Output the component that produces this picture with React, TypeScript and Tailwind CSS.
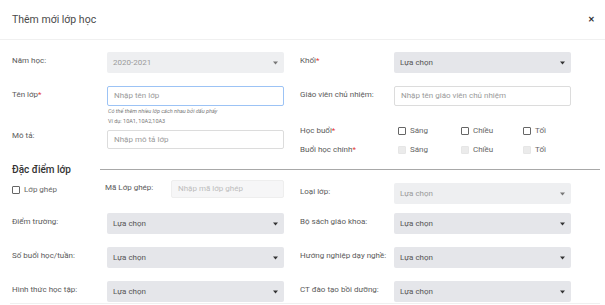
import React from "react";

const Req = () => <span className="text-[#e53935]">*</span>;

const Select = ({ value = "Lựa chọn", disabled = false, w = "w-[177px]" }: { value?: string; disabled?: boolean; w?: string }) => (
  <div
    className={`${w} h-[21px] rounded-[2px] flex items-center justify-between pl-[6px] pr-[6px] ${
      disabled ? "bg-[#eeeff1] text-[#9a9a9a]" : "bg-[#e5e6ea] text-[#555]"
    }`}
  >
    <span className="text-[8px] leading-none">{value}</span>
    <svg width="5" height="4" viewBox="0 0 5 4" className={disabled ? "text-[#777]" : "text-[#333]"}>
      <path d="M0 0.5 L5 0.5 L2.5 3.5 Z" fill="currentColor" />
    </svg>
  </div>
);

const Input = ({
  placeholder,
  focused = false,
  disabled = false,
  w = "w-[177px]",
  h = "h-[20px]",
}: {
  placeholder: string;
  focused?: boolean;
  disabled?: boolean;
  w?: string;
  h?: string;
}) => (
  <div
    className={`${w} ${h} rounded-[2px] border flex items-center pl-[6px] ${
      focused ? "border-[#9cc3f5]" : disabled ? "border-[#eeeeee] bg-[#f6f6f7]" : "border-[#dcdcdc] bg-white"
    }`}
  >
    <span className={`text-[8px] leading-none ${disabled ? "text-[#bdbdbd]" : "text-[#9a9a9a]"}`}>{placeholder}</span>
  </div>
);

const Check = ({ label, disabled = false }: { label: string; disabled?: boolean }) => (
  <div className="flex items-center gap-[4px]">
    <span
      className={`w-[8px] h-[8px] rounded-[1px] border ${
        disabled ? "border-[#e6e6e6] bg-[#ebebeb]" : "border-[#666] bg-white"
      }`}
    />
    <span className="text-[8px] leading-[10px] text-[#666]">{label}</span>
  </div>
);

const Label = ({ children, w }: { children: React.ReactNode; w: string }) => (
  <div className={`${w} shrink-0 pt-[4px] text-[8px] leading-[10px] text-[#5a5a5a]`}>{children}</div>
);

const Row = ({
  left,
  right,
  className = "",
}: {
  left: React.ReactNode;
  right: React.ReactNode;
  className?: string;
}) => (
  <div className={`flex ${className}`}>
    <div className="flex w-[288px] shrink-0">{left}</div>
    <div className="flex">{right}</div>
  </div>
);

export default function App() {
  return (
    <div className="w-[605px] h-[305px] overflow-hidden bg-white font-['Roboto',sans-serif]">
      {/* Header */}
      <div className="h-[40px] border-b border-[#f0f0f0] flex items-center justify-between pl-[12px] pr-[10px]">
        <h2 className="text-[10.5px] text-[#4a4a4a]">Thêm mới lớp học</h2>
        <span className="text-[8px] font-bold text-[#333] leading-none">✕</span>
      </div>

      {/* Body */}
      <div className="pl-[12px] pr-[5px] pt-[12px]">
        <Row
          left={
            <>
              <Label w="w-[95px]">Năm học:</Label>
              <Select value="2020-2021" disabled />
            </>
          }
          right={
            <>
              <Label w="w-[94px]">
                Khối<Req />
              </Label>
              <Select />
            </>
          }
        />

        <Row
          className="mt-[13px]"
          left={
            <>
              <Label w="w-[95px]">
                Tên lớp<Req />
              </Label>
              <div className="flex flex-col">
                <Input placeholder="Nhập tên lớp" focused />
                <p className="pl-[1px] text-[5.5px] leading-[10px] italic text-[#777]">
                  Có thể thêm nhiều lớp cách nhau bởi dấu phẩy
                </p>
                <p className="pl-[1px] text-[5.5px] leading-[10px] text-[#777]">Ví dụ: 10A1, 10A2,10A3</p>
              </div>
            </>
          }
          right={
            <>
              <Label w="w-[94px]">Giáo viên chủ nhiệm:</Label>
              <Input placeholder="Nhập tên giáo viên chủ nhiệm" />
            </>
          }
        />

        <Row
          left={
            <>
              <Label w="w-[95px]">
                <div className="pt-[1px]">Mô tả:</div>
              </Label>
              <div className="pt-[4px]">
                <Input placeholder="Nhập mô tả lớp" h="h-[19px]" />
              </div>
            </>
          }
          right={
            <div className="flex flex-col gap-[7px] -mt-[1px]">
              <div className="flex items-center h-[12px]">
                <div className="w-[98px] text-[8px] text-[#5a5a5a]">
                  Học buổi<Req />
                </div>
                <div className="w-[63px]"><Check label="Sáng" /></div>
                <div className="w-[62px]"><Check label="Chiều" /></div>
                <Check label="Tối" />
              </div>
              <div className="flex items-center h-[12px]">
                <div className="w-[98px] text-[8px] text-[#5a5a5a]">
                  Buổi học chính<Req />
                </div>
                <div className="w-[63px]"><Check label="Sáng" disabled /></div>
                <div className="w-[62px]"><Check label="Chiều" disabled /></div>
                <Check label="Tối" disabled />
              </div>
            </div>
          }
        />

        {/* Section heading */}
        <div className="flex items-center mt-[6px] h-[14px]">
          <h3 className="w-[88px] shrink-0 text-[10px] font-medium text-[#333]">Đặc điểm lớp</h3>
          <div className="flex-1 border-t-[1.5px] border-[#a8a8a8]" />
        </div>

        <Row
          className="mt-[4px]"
          left={
            <>
              <div className="w-[93px] pt-[5px]">
                <Check label="Lớp ghép" />
              </div>
              <div className="w-[66px] pt-[3px] text-[8px] leading-[10px] text-[#5a5a5a]">Mã Lớp ghép:</div>
              <Input placeholder="Nhập mã lớp ghép" disabled w="w-[113px]" h="h-[18px]" />
            </>
          }
          right={
            <div className="flex mt-[3px]">
              <Label w="w-[94px]">Loại lớp:</Label>
              <Select disabled />
            </div>
          }
        />

        <Row
          className="mt-[9px]"
          left={
            <>
              <Label w="w-[95px]">Điểm trường:</Label>
              <Select />
            </>
          }
          right={
            <>
              <Label w="w-[94px]">Bộ sách giáo khoa:</Label>
              <Select />
            </>
          }
        />

        <Row
          className="mt-[13px]"
          left={
            <>
              <Label w="w-[95px]">Số buổi học/tuần:</Label>
              <Select />
            </>
          }
          right={
            <>
              <Label w="w-[94px]">Hướng nghiệp dạy nghề:</Label>
              <Select />
            </>
          }
        />

        <Row
          className="mt-[13px]"
          left={
            <>
              <Label w="w-[95px]">Hình thức học tập:</Label>
              <Select />
            </>
          }
          right={
            <>
              <Label w="w-[94px]">CT đào tạo bồi dưỡng:</Label>
              <Select />
            </>
          }
        />
        <div className="mt-[1px] -ml-[2px] border-t border-[#f0f0f0]" />
      </div>
    </div>
  );
}
